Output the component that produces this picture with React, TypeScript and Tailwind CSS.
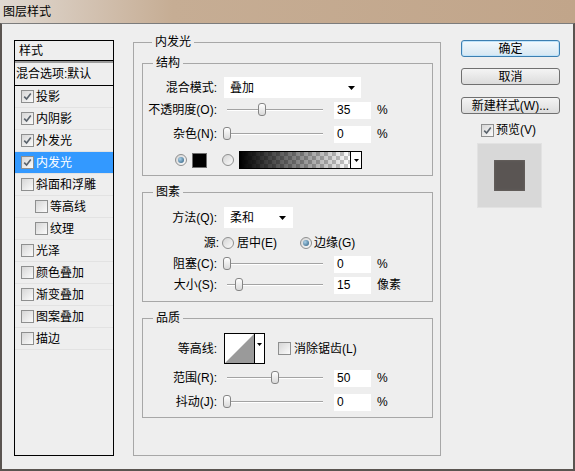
import React from 'react';

type StyleItem = { label: string; checked?: boolean; selected?: boolean; indent?: boolean };

const styleItems: StyleItem[] = [
  { label: '投影', checked: true },
  { label: '内阴影', checked: true },
  { label: '外发光', checked: true },
  { label: '内发光', checked: true, selected: true },
  { label: '斜面和浮雕' },
  { label: '等高线', indent: true },
  { label: '纹理', indent: true },
  { label: '光泽' },
  { label: '颜色叠加' },
  { label: '渐变叠加' },
  { label: '图案叠加' },
  { label: '描边' },
];

const Checkbox = ({ checked }: { checked?: boolean }) => (
  <span className="flex h-[13px] w-[13px] shrink-0 items-center justify-center border border-[#8e8f8f] bg-linear-to-br from-[#d6d6d6] to-[#fbfbfb]">
    {checked && (
      <svg width="9" height="9" viewBox="0 0 9 9">
        <path d="M1.2 4.6 L3.6 7 L7.8 1.6" fill="none" stroke="#5a636c" strokeWidth="1.6" />
      </svg>
    )}
  </span>
);

const Radio = ({ checked }: { checked?: boolean }) => (
  <span className="flex h-[12px] w-[12px] shrink-0 items-center justify-center rounded-full border border-[#8e8f8f] bg-linear-to-br from-[#d4d4d4] to-[#fbfbfb]">
    {checked && <span className="h-[6px] w-[6px] rounded-full bg-[radial-gradient(circle_at_35%_35%,#a9d0e8,#2a5a7c)]" />}
  </span>
);

const DownTri = () => (
  <svg width="7" height="4" viewBox="0 0 7 4">
    <path d="M0 0 H7 L3.5 4 Z" fill="#000" />
  </svg>
);

// pos is the thumb position in percent of the track
const Slider = ({ pos }: { pos: number }) => (
  <div className="relative ml-[6px] h-[14px] w-[104px] shrink-0">
    <div className="absolute left-[4px] right-[4px] top-[6px] h-[2px] border-t border-[#a3a3a3] bg-white" />
    <div
      className="absolute top-[0px] h-[13px] w-[8px] rounded-[3px] border border-[#858585] bg-linear-to-b from-white to-[#d9d9d9]"
      style={{ left: pos * 0.96 }}
    />
  </div>
);

const NumBox = ({ v }: { v: string }) => (
  <div className="ml-[7px] flex h-[17px] w-[37px] shrink-0 items-center bg-white pl-[3px]">{v}</div>
);

const Label = ({ children }: { children: React.ReactNode }) => (
  <span className="w-[74px] shrink-0 whitespace-nowrap text-right">{children}</span>
);

const SliderRow = ({ label, value, pos, unit, h }: { label: string; value: string; pos: number; unit: string; h: string }) => (
  <div className={`flex items-center ${h}`}>
    <Label>{label}</Label>
    <Slider pos={pos} />
    <NumBox v={value} />
    <span className="ml-[6px]">{unit}</span>
  </div>
);

const Group = ({ title, className, children }: { title: string; className?: string; children: React.ReactNode }) => (
  <fieldset className={`border border-[#a7a7a7] px-0 ${className ?? ''}`}>
    <legend className="ml-[10px] px-[3px] leading-[16px]">{title}</legend>
    {children}
  </fieldset>
);

const Btn = ({ children, primary, className }: { children: React.ReactNode; primary?: boolean; className?: string }) => (
  <div
    className={`flex h-[17px] w-[99px] items-center justify-center rounded-[3px] border leading-none ${
      primary
        ? 'border-[#3c7fb1] bg-linear-to-b from-[#f3f9fd] to-[#d6e7f2] shadow-[inset_0_0_0_1px_#bfe3fa]'
        : 'border-[#707070] bg-linear-to-b from-[#f4f4f4] to-[#dcdcdc]'
    } ${className ?? ''}`}
  >
    {children}
  </div>
);

export default function App() {
  return (
    <div className="flex h-[471px] w-[575px] flex-col overflow-hidden bg-[#eeeeee] font-['Liberation_Sans','Noto_Sans_CJK_SC',sans-serif] text-[12px] leading-none text-black">
      {/* title bar */}
      <div className="flex h-[23px] shrink-0 items-center bg-linear-to-r from-[#e0d9d2] via-[#c6ad94] via-30% to-[#c1a58a] pl-[3px] text-[12px]">
        图层样式
      </div>

      <div className="flex flex-1 border-x-2 border-b-2 border-t border-x-[#5a5450] border-b-[#5a5450] border-t-[#7c7c7c] pl-[12px] pt-[10px]">
        {/* style list */}
        <div className="mt-[6px] flex h-[416px] w-[100px] shrink-0 flex-col border border-black">
          <div className="flex h-[20px] shrink-0 items-center border-b border-black pl-[4px]">样式</div>
          <div className="h-[2px] shrink-0 bg-[#9b9b9b]" />
          <div className="flex h-[23px] shrink-0 items-center border-b border-black pl-[1px]">混合选项:默认</div>
          {styleItems.map((it) => (
            <div
              key={it.label}
              className={`flex h-[22px] shrink-0 items-center border-b border-[#e2e2e2] ${
                it.indent ? 'pl-[20px]' : 'pl-[6px]'
              } ${it.selected ? 'bg-[#3399ff] text-white' : ''}`}
            >
              <Checkbox checked={it.checked} />
              <span className="ml-[2px]">{it.label}</span>
            </div>
          ))}
        </div>

        {/* main settings */}
        <Group title="内发光" className="ml-[19px] h-[422px] w-[308px] shrink-0 pl-[8px] pr-[7px]">
          <Group title="结构" className="mt-[5px] pb-[1px]">
            <div className="mt-[6px] flex h-[21px] items-center">
              <Label>混合模式:</Label>
              <div className="ml-[7px] flex h-[21px] w-[137px] items-center justify-between bg-white pl-[6px] pr-[6px]">
                <span>叠加</span>
                <DownTri />
              </div>
            </div>
            <SliderRow label="不透明度(O):" value="35" pos={36} unit="%" h="h-[24px]" />
            <SliderRow label="杂色(N):" value="0" pos={0} unit="%" h="h-[24px]" />
            <div className="flex h-[28px] items-center pl-[32px]">
              <Radio checked />
              <span className="ml-[5px] h-[15px] w-[15px] border border-[#6e6e6e] bg-black" />
              <span className="ml-[15px]">
                <Radio />
              </span>
              <div className="ml-[5px] flex h-[18px] w-[123px] border border-black bg-white">
                <div className="h-full flex-1 bg-[image:repeating-conic-gradient(#c9c9c9_0%_25%,#ffffff_0%_50%)] bg-[length:8px_8px]">
                  <div className="h-full w-full bg-linear-to-r from-black to-transparent" />
                </div>
                <div className="flex w-[11px] items-center justify-center border-l border-black">
                  <svg width="5" height="3" viewBox="0 0 5 3">
                    <path d="M0 0 H5 L2.5 3 Z" fill="#000" />
                  </svg>
                </div>
              </div>
            </div>
          </Group>

          <Group title="图素" className="mt-[8px] pb-[5px]">
            <div className="mt-[7px] flex h-[21px] items-center">
              <Label>方法(Q):</Label>
              <div className="ml-[7px] flex h-[21px] w-[69px] items-center justify-between bg-white pl-[6px] pr-[7px]">
                <span>柔和</span>
                <DownTri />
              </div>
            </div>
            <div className="mt-[4px] flex h-[22px] items-center">
              <span className="w-[76px] shrink-0 text-right">源:</span>
              <span className="ml-[3px] flex w-[78px] items-center">
                <Radio />
                <span className="ml-[3px]">居中(E)</span>
              </span>
              <Radio checked />
              <span className="ml-[2px]">边缘(G)</span>
            </div>
            <SliderRow label="阻塞(C):" value="0" pos={0} unit="%" h="h-[20px]" />
            <SliderRow label="大小(S):" value="15" pos={12} unit="像素" h="h-[22px]" />
          </Group>

          <Group title="品质" className="mt-[8px] pb-[5px]">
            <div className="mt-[7px] flex h-[31px] items-center">
              <Label>等高线:</Label>
              <div className="ml-[7px] flex h-[31px] w-[41px] border border-black bg-white">
                <svg width="29" height="29" viewBox="0 0 29 29" className="shrink-0">
                  <path d="M0 29 L29 0 L29 29 Z" fill="#9a9a9a" />
                </svg>
                <div className="flex flex-1 items-start justify-center border-l border-black pt-[9px]">
                  <svg width="5" height="3" viewBox="0 0 5 3">
                    <path d="M0 0 H5 L2.5 3 Z" fill="#000" />
                  </svg>
                </div>
              </div>
              <span className="ml-[13px]">
                <Checkbox />
              </span>
              <span className="ml-[3px]">消除锯齿(L)</span>
            </div>
            <SliderRow label="范围(R):" value="50" pos={50} unit="%" h="h-[28px]" />
            <SliderRow label="抖动(J):" value="0" pos={0} unit="%" h="h-[20px]" />
          </Group>
        </Group>

        {/* buttons */}
        <div className="ml-[20px] mt-[6px] flex w-[99px] shrink-0 flex-col">
          <Btn primary>确定</Btn>
          <Btn className="mt-[11px]">取消</Btn>
          <Btn className="mt-[12px]">新建样式(W)...</Btn>
          <div className="mt-[6px] flex h-[20px] items-center pl-[20px]">
            <Checkbox checked />
            <span className="ml-[2px]">预览(V)</span>
          </div>
          <div className="ml-[16px] mt-[3px] flex h-[65px] w-[65px] items-center justify-center border border-[#e2e2e2] bg-[#d8d8d8]">
            <div className="h-[31px] w-[31px] bg-[#5a5553] shadow-[inset_0_0_3px_#6e6a68]" />
          </div>
        </div>
      </div>
    </div>
  );
}
